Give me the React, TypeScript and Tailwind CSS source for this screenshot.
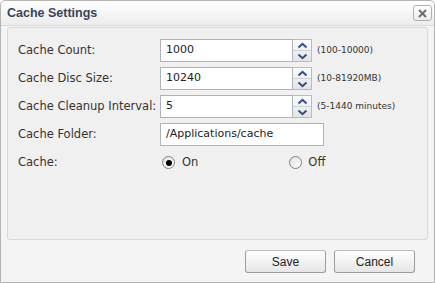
import React from "react";

const Spinner = () => (
  <div className="flex h-[23px] w-[19px] flex-col border border-l-0 border-[#b8bcc2] bg-gradient-to-b from-[#fbfbfb] to-[#e4e4e4]">
    <div className="flex flex-1 items-center justify-center border-b border-[#cfd2d6]">
      <svg width="11" height="7" viewBox="0 0 11 7">
        <path d="M1.5 5.5 L5.5 1.8 L9.5 5.5" fill="none" stroke="#2c4f8e" strokeWidth="2" />
      </svg>
    </div>
    <div className="flex flex-1 items-center justify-center">
      <svg width="11" height="7" viewBox="0 0 11 7">
        <path d="M1.5 1.5 L5.5 5.2 L9.5 1.5" fill="none" stroke="#2c4f8e" strokeWidth="2" />
      </svg>
    </div>
  </div>
);

const Row = ({ label, children }: { label: string; children: React.ReactNode }) => (
  <div className="flex h-[23px] items-center">
    <div className="w-[142px] shrink-0 text-[11.5px] text-[#333]">{label}</div>
    {children}
  </div>
);

const NumField = ({ value, hint }: { value: string; hint: string }) => (
  <div className="flex items-center">
    <div className="flex h-[23px] w-[133px] items-center border border-[#aeb3ba] bg-white pl-[5px] text-[11px] text-[#222]">
      {value}
    </div>
    <Spinner />
    <span className="ml-[5px] text-[9px] text-[#333]">{hint}</span>
  </div>
);

const Radio = ({ checked }: { checked?: boolean }) => (
  <div className="flex h-[13px] w-[13px] items-center justify-center rounded-full border border-[#7f8080] bg-gradient-to-br from-[#e2e2e2] to-white">
    {checked && <div className="h-[6px] w-[6px] rounded-full bg-black" />}
  </div>
);

export default function App() {
  return (
    <div
      className="flex h-[283px] w-[435px] flex-col rounded-t-[5px] border border-[#b4b4b4] bg-[#f4f4f4]"
      style={{ fontFamily: '"DejaVu Sans", sans-serif' }}
    >
      <div className="flex h-[25px] shrink-0 items-center justify-between rounded-t-[5px] border-b border-[#d9d9d9] bg-gradient-to-b from-white to-[#ececec] pl-[6px] pr-[2px]">
        <span
          className="text-[12.5px] font-bold text-[#37465a]"
          style={{ fontFamily: '"Liberation Sans", sans-serif' }}
        >
          Cache Settings
        </span>
        <div className="flex h-[16px] w-[19px] items-center justify-center rounded-[3px] border border-[#b0b0b0] bg-gradient-to-b from-white to-[#ececec]">
          <svg width="9" height="9" viewBox="0 0 9 9">
            <path d="M1 1 L8 8 M8 1 L1 8" stroke="#6d6d6d" strokeWidth="2" />
          </svg>
        </div>
      </div>
      <div className="mx-[6px] mt-[1px] flex h-[213px] flex-col gap-[5px] rounded-[3px] border border-[#d8d8d8] bg-[#f0f0f0] pl-[10px] pt-[11px]">
        <Row label="Cache Count:">
          <NumField value="1000" hint="(100-10000)" />
        </Row>
        <Row label="Cache Disc Size:">
          <NumField value="10240" hint="(10-81920MB)" />
        </Row>
        <Row label="Cache Cleanup Interval:">
          <NumField value="5" hint="(5-1440 minutes)" />
        </Row>
        <Row label="Cache Folder:">
          <div className="flex h-[23px] w-[164px] items-center border border-[#aeb3ba] bg-white pl-[5px] text-[11px] text-[#222]">
            /Applications/cache
          </div>
        </Row>
        <Row label="Cache:">
          <div className="flex items-center pl-[2px]">
            <Radio checked />
            <span className="ml-[7px] text-[11.5px] text-[#333]">On</span>
            <div className="ml-[91px]">
              <Radio />
            </div>
            <span className="ml-[6px] text-[11.5px] text-[#333]">Off</span>
          </div>
        </Row>
      </div>
      <div className="flex justify-end gap-[8px] pr-[19px] pt-[10px]">
        {["Save", "Cancel"].map((t) => (
          <button
            key={t}
            className="flex h-[23px] w-[81px] items-center justify-center rounded-[3px] border border-[#9c9c9c] border-t-[#bdbdbd] bg-gradient-to-b from-white to-[#e6e6e6] text-[12px] text-[#222]"
            style={{ fontFamily: '"Liberation Sans", sans-serif' }}
          >
            {t}
          </button>
        ))}
      </div>
    </div>
  );
}
